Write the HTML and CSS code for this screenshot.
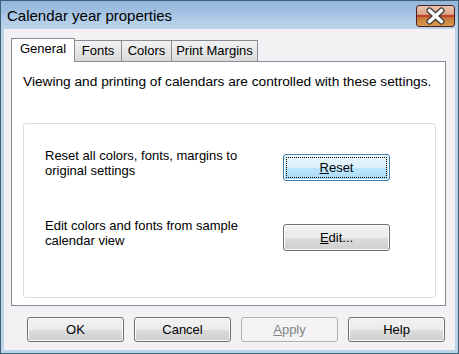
FILE: index.html
```html
<!DOCTYPE html>
<html lang="en">
<head>
    <meta charset="UTF-8">
    <title>Calendar year properties</title>
    <link rel="stylesheet" href="styles.css">
</head>
<body>
    <div class="window">
        <div class="titlebar">
            <span class="title">Calendar year properties</span>
            <span class="close-btn">
                <svg width="37" height="20" viewBox="0 0 37 20">
                    <path d="M12.5 4.5 L24.5 15.5 M24.5 4.5 L12.5 15.5" stroke="#3a3a3a" stroke-width="6" stroke-linecap="round"/>
                    <path d="M12.5 4.5 L24.5 15.5 M24.5 4.5 L12.5 15.5" stroke="#ffffff" stroke-width="3.6" stroke-linecap="round"/>
                </svg>
            </span>
        </div>

        <div class="client">
            <div class="tabs">
                <div class="tab active tab-general">General</div>
                <div class="tab tab-fonts">Fonts</div>
                <div class="tab tab-colors">Colors</div>
                <div class="tab tab-margins">Print Margins</div>
            </div>

            <div class="panel">
                <p class="intro">Viewing and printing of calendars are controlled with these settings.</p>
                <div class="group">
                    <div class="row">
                        <p>Reset all colors, fonts, margins to original settings</p>
                        <button class="btn btn-large focused"><span class="focus-ring"><u>R</u>eset</span></button>
                    </div>
                    <div class="row">
                        <p>Edit colors and fonts from sample calendar view</p>
                        <button class="btn btn-large"><u>E</u>dit...</button>
                    </div>
                </div>
            </div>

            <div class="actions">
                <button class="btn">OK</button>
                <button class="btn">Cancel</button>
                <button class="btn disabled"><u>A</u>pply</button>
                <button class="btn">Help</button>
            </div>
        </div>
    </div>
</body>
</html>
```

FILE: styles.css
```css
body {
    margin: 0;
    padding: 0;
    font-family: "Liberation Sans", Arial, sans-serif;
    font-size: 13px;
    color: #000;
}
.window {
    width: 459px;
    height: 354px;
    box-sizing: border-box;
    border: 1px solid #3c6273;
    background: #bcd3ea;
    display: flex;
    flex-direction: column;
}
.titlebar {
    height: 28px;
    flex: none;
    display: flex;
    justify-content: space-between;
    align-items: flex-start;
    background: linear-gradient(to bottom, #93b6da 0%, #a2c1e2 40%, #b4cfe9 75%, #bcd3ea 100%);
}
.title {
    margin-left: 6px;
    padding-top: 1px;
    line-height: 28px;
    font-size: 15px;
    color: #000;
}
.close-btn {
    margin-top: 4px;
    margin-right: 3px;
    width: 39px;
    height: 22px;
    box-sizing: border-box;
    border: 1px solid #4d1f24;
    border-radius: 3px;
    display: flex;
    background: linear-gradient(to bottom, #eac3ad 0%, #dca68a 42%, #c2412c 46%, #c2412c 54%, #c57a38 58%, #d69a4e 100%);
}
.client {
    flex: 1;
    margin: 0 3px 3px;
    background: #f4f1f5;
    padding-top: 9px;
}
.tabs {
    display: flex;
    align-items: flex-end;
    height: 23px;
    margin-left: 7px;
}
.tab {
    box-sizing: border-box;
    height: 21px;
    line-height: 19px;
    text-align: center;
    border: 1px solid #898c95;
    border-bottom: none;
    margin-left: -1px;
    background: linear-gradient(to bottom, #f2f2f2, #e6e6e6 50%, #d9d9d9);
}
.tab.active {
    height: 24px;
    margin-bottom: -1px;
    margin-left: 0;
    position: relative;
    z-index: 1;
    background: #fff;
}
.tab-general { width: 64px; }
.tab-fonts { width: 48px; }
.tab-colors { width: 51px; }
.tab-margins { width: 87px; }
.panel {
    width: 435px;
    height: 245px;
    margin-left: 7px;
    box-sizing: border-box;
    border: 1px solid #898c95;
    background: #fff;
    padding: 12px 0 0 11px;
}
.intro {
    margin: 0;
    line-height: 15px;
    font-size: 13.7px;
}
.group {
    margin-top: 34px;
    width: 413px;
    height: 175px;
    box-sizing: border-box;
    border: 1px solid #d5dfe5;
    border-radius: 3px;
    padding: 24px 0 0 21px;
}
.row {
    display: flex;
    align-items: flex-start;
    height: 70px;
}
.row p {
    margin: 0;
    width: 215px;
    line-height: 15px;
}
.btn {
    width: 97px;
    height: 25px;
    box-sizing: border-box;
    padding: 0;
    font-family: "Liberation Sans", Arial, sans-serif;
    font-size: 13px;
    color: #000;
    border: 1px solid #707070;
    border-radius: 3px;
    background: linear-gradient(to bottom, #f2f2f2 0%, #ebebeb 50%, #dddddd 51%, #cfcfcf 100%);
    box-shadow: inset 0 0 0 1px #fcfcfc;
}
.btn-large {
    width: 107px;
    height: 27px;
    margin-left: 23px;
    margin-top: 6px;
}
.btn.focused {
    border-color: #3c7fb1;
    background: linear-gradient(to bottom, #eaf6fd 0%, #d9f0fc 50%, #bee6fd 51%, #a7d9f5 100%);
    padding: 2px;
}
.focus-ring {
    display: flex;
    align-items: center;
    justify-content: center;
    height: 100%;
    box-sizing: border-box;
    border: 1px dotted #000;
}
.btn.disabled {
    color: #838383;
    border-color: #adb2b5;
    background: #f4f4f4;
    box-shadow: none;
}
.actions {
    display: flex;
    gap: 10px;
    margin-top: 11px;
    padding-left: 23px;
}
```
